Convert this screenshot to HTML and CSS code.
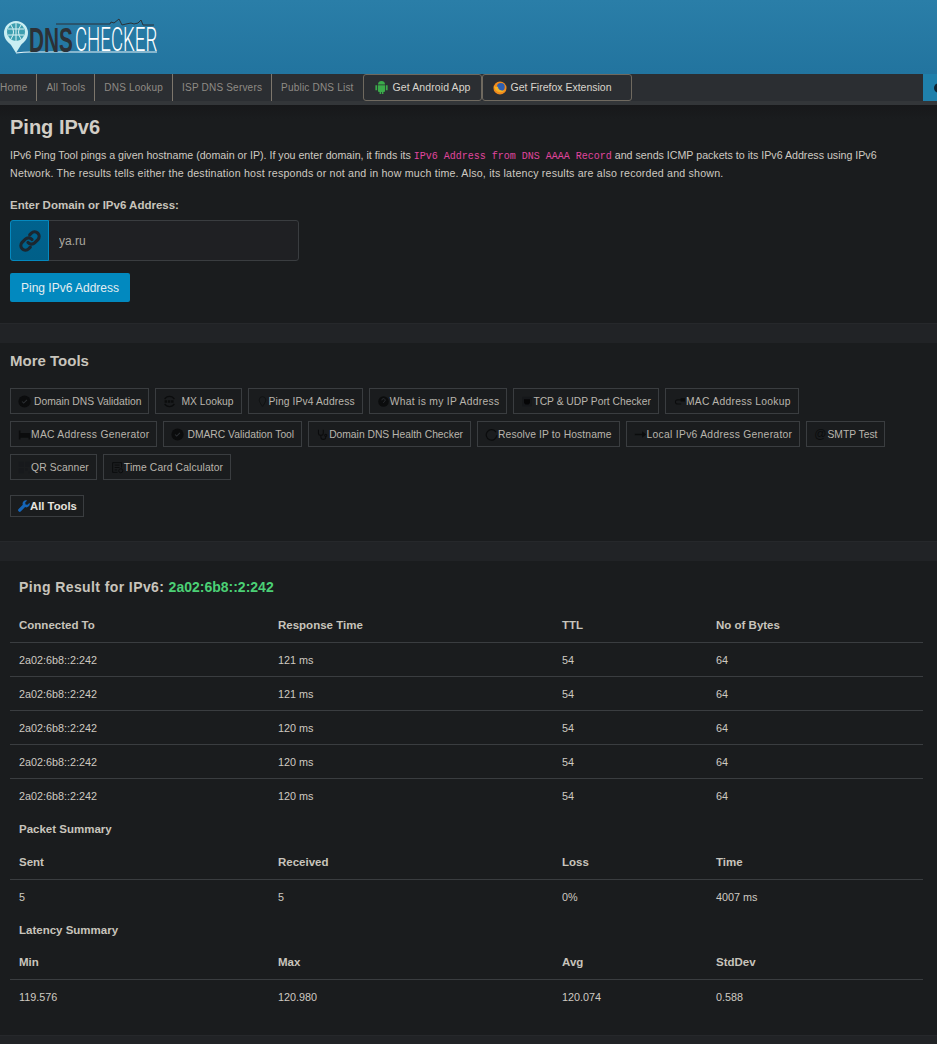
FILE: index.html
```html
<!DOCTYPE html>
<html lang="en">
<head>
    <meta charset="UTF-8">
    <meta name="viewport" content="width=device-width, initial-scale=1.0">
    <title>Ping IPv6</title>
    <link rel="stylesheet" href="styles.css">
</head>
<body>
    <header class="top">
        <svg class="logo" width="170" height="60" viewBox="0 0 170 60">
            <path d="M16 21a12 12 0 0 1 12 12c0 6-4 9-7 12l-5 8-5-8c-3-3-7-6-7-12a12 12 0 0 1 12-12z" fill="#c9eef2"/>
            <circle cx="16" cy="32" r="9" fill="#3e9fb0"/>
            <path d="M8 29h16M8 35h16M16 23v18M11 25q5 7 0 14M21 25q-5 7 0 14" stroke="#d9f2f4" stroke-width="1" fill="none"/>
            <path d="M16 53q8-1 14-1h127" stroke="#e8f6fa" stroke-width="1.200" fill="none"/>
            <path d="M56 24h54l1-2 3 1 5-4 3 6 4-1 5-1 3 1 4-1 3-3 2 5h11" stroke="#2c3136" stroke-width="1" fill="none"/>
            <text class="logo-dns" transform="translate(29 52) scale(.595 1)">DNS</text>
            <text class="logo-checker" transform="translate(75 51) scale(.565 1)">CHECKER</text>
        </svg>
    </header>

    <nav class="nav">
        <a class="nav-link first">Home</a>
        <a class="nav-link">All Tools</a>
        <a class="nav-link">DNS Lookup</a>
        <a class="nav-link">ISP DNS Servers</a>
        <a class="nav-link plain">Public DNS List</a>
        <a class="nav-btn android">
            <svg width="13" height="14" viewBox="0 0 13 14" fill="#3bab4a"><path d="M3 4.600a3.500 3.500 0 0 1 7 0zM3 5.300h7v5.600a1 1 0 0 1-1 1h-.6V14H6.900v-2.100H6.100V14H4.600v-2.100H4a1 1 0 0 1-1-1zM.4 5.300h1.800v5H.4zM10.800 5.300h1.800v5h-1.800z"/></svg>
            Get Android App
        </a>
        <a class="nav-btn firefox">
            <svg class="fox" width="14" height="14" viewBox="0 0 15 15"><circle cx="7.500" cy="7.500" r="7" fill="#f08a1d"/><circle cx="8.400" cy="6.400" r="4.200" fill="#2f5fb0"/><path d="M1 5q1 6 6 7 4 .5 6.400-3-2.400 2-5 1Q5 9 5.500 6 3 7 1 5z" fill="#f4b324"/></svg>
            Get Firefox Extension
        </a>
        <span class="nav-spacer"></span>
        <span class="nav-theme"><span class="theme-dot"></span></span>
    </nav>
    <div class="nav-strip"></div>

    <section class="panel intro">
        <h1>Ping IPv6</h1>
        <p class="lead">IPv6 Ping Tool pings a given hostname (domain or IP). If you enter domain, it finds its <code>IPv6 Address from DNS AAAA Record</code> and sends ICMP packets to its IPv6 Address using IPv6 <span class="lead-rest">Network. The results tells either the destination host responds or not and in how much time. Also, its latency results are also recorded and shown.</span></p>
        <label class="field-label" for="host">Enter Domain or IPv6 Address:</label>
        <div class="input-group">
            <span class="input-icon">
                <svg width="24" height="24" viewBox="0 0 24 24" fill="none" stroke="#1b2730" stroke-width="3.200" stroke-linecap="round"><path d="M10 13.500a4.500 4.500 0 0 0 6.600.4l3.300-3.300a4.600 4.600 0 0 0-6.500-6.500l-1.700 1.700"/><path d="M14 10.500a4.500 4.500 0 0 0-6.600-.4l-3.300 3.300a4.600 4.600 0 0 0 6.500 6.500l1.700-1.700"/></svg>
            </span>
            <input id="host" class="host-input" type="text" value="ya.ru">
        </div>
        <button class="ping-btn">Ping IPv6 Address</button>
    </section>

    <div class="band"></div>

    <section class="panel more">
        <h2>More Tools</h2>
        <div class="tools">
            <a class="tool"><svg class="ico" viewBox="0 0 16 16"><circle cx="8" cy="8" r="7.500" fill="#0b0c0d"/><path d="M5 8l2 2 4-4" stroke="#2c2f33" stroke-width="1.300" fill="none"/></svg>Domain DNS Validation</a>
            <a class="tool"><svg class="ico wide" viewBox="0 0 16 16" fill="none" stroke="#0b0c0d" stroke-width="1.500"><path d="M2 5a7 7 0 0 1 12 0M2 11a7 7 0 0 0 12 0"/><path d="M2 8h12" stroke-width="3" stroke-dasharray="3 1"/></svg>MX Lookup</a>
            <a class="tool loose"><svg class="ico flush" viewBox="0 0 16 16" fill="none" stroke="#0f1113" stroke-width="1.200"><path d="M8 2a4 4 0 0 1 4 4c0 3-4 8-4 8S4 9 4 6a4 4 0 0 1 4-4z"/></svg>Ping IPv4 Address</a>
            <a class="tool addr"><svg class="ico flush" viewBox="0 0 16 16"><circle cx="8" cy="8" r="6.500" fill="#0b0c0d"/><path d="M6 6.500a2 2 0 1 1 3 1.700c-.7.400-1 .8-1 1.500" stroke="#2c2f33" stroke-width="1.200" fill="none"/></svg>What is my IP Address</a>
            <a class="tool"><svg class="ico flush snug" viewBox="0 0 16 16"><rect x="1.500" y="1.500" width="13" height="13" rx="1" fill="#15171a"/><path d="M4 5h8v5l-2 2H6l-2-2z" fill="#050506"/></svg>TCP &amp; UDP Port Checker</a>
            <a class="tool addr"><svg class="ico flush" viewBox="0 0 16 16" fill="none" stroke="#0b0c0d" stroke-width="1.300"><path d="M13 6H6Q3 6 3 8.500T6 11h4"/><path d="M10 4.500h4v3h-4z" fill="#0b0c0d"/></svg>MAC Address Lookup</a>
            <a class="tool addr"><svg class="ico flush" viewBox="0 0 16 16" fill="#0b0c0d"><path d="M1 3h2v3h12v8h-2v-2H3v2H1z"/></svg>MAC Address Generator</a>
            <a class="tool"><svg class="ico" viewBox="0 0 16 16"><circle cx="8" cy="8" r="7.500" fill="#0b0c0d"/><path d="M5 8l2 2 4-4" stroke="#2c2f33" stroke-width="1.300" fill="none"/></svg>DMARC Validation Tool</a>
            <a class="tool"><svg class="ico flush" viewBox="0 0 16 16" fill="none" stroke="#0b0c0d" stroke-width="1.300"><path d="M3 2v4a3 3 0 0 0 6 0V2M6 9v2a3 3 0 0 0 6 0v-1"/><circle cx="12" cy="9" r="1.300"/></svg>Domain DNS Health Checker</a>
            <a class="tool loose"><svg class="ico flush" viewBox="0 0 16 16" fill="none" stroke="#0b0c0d" stroke-width="1.500"><path d="M13.500 5A6.500 6.500 0 1 0 14.500 9"/></svg>Resolve IP to Hostname</a>
            <a class="tool addr"><svg class="ico flush" viewBox="0 0 16 16"><path d="M1 7h9V4l5 4-5 4V9H1z" fill="#0b0c0d"/></svg>Local IPv6 Address Generator</a>
            <a class="tool"><span class="at">@</span>SMTP Test</a>
            <a class="tool loose"><svg class="ico flush" viewBox="0 0 16 16" fill="#17191c"><path d="M1 1h6v6H1zM9 1h6v6H9zM1 9h6v6H1zM9 9h3v3H9zM13 13h2v2h-2z"/></svg>QR Scanner</a>
            <a class="tool loose"><svg class="ico flush" viewBox="0 0 16 16" fill="none" stroke="#0b0c0d" stroke-width="1.200"><path d="M13 8V2H2v12h6M4.500 5h6M4.500 8h6M4.500 11h3"/><circle cx="12" cy="12" r="2.500"/></svg>Time Card Calculator</a>
        </div>
        <a class="all-tools"><svg width="12" height="12" viewBox="0 0 14 14" fill="#1565b8"><path d="M13.500 3.200 11 5.600 8.800 5.200 8.400 3l2.400-2.500A4 4 0 0 0 5.600 5.600L.7 10.500a1.900 1.900 0 0 0 2.700 2.700l4.900-4.900a4 4 0 0 0 5.200-5.100z"/></svg>All Tools</a>
    </section>

    <div class="band"></div>

    <section class="panel results">
        <h3>Ping Result for IPv6: <span class="ip">2a02:6b8::2:242</span></h3>
        <table class="grid">
            <thead><tr><th>Connected To</th><th>Response Time</th><th>TTL</th><th>No of Bytes</th></tr></thead>
            <tbody>
                <tr><td>2a02:6b8::2:242</td><td>121 ms</td><td>54</td><td>64</td></tr>
                <tr><td>2a02:6b8::2:242</td><td>121 ms</td><td>54</td><td>64</td></tr>
                <tr><td>2a02:6b8::2:242</td><td>120 ms</td><td>54</td><td>64</td></tr>
                <tr><td>2a02:6b8::2:242</td><td>120 ms</td><td>54</td><td>64</td></tr>
                <tr><td>2a02:6b8::2:242</td><td>120 ms</td><td>54</td><td>64</td></tr>
            </tbody>
        </table>
        <h4>Packet Summary</h4>
        <table class="grid">
            <thead><tr><th>Sent</th><th>Received</th><th>Loss</th><th>Time</th></tr></thead>
            <tbody><tr><td>5</td><td>5</td><td>0%</td><td>4007 ms</td></tr></tbody>
        </table>
        <h4>Latency Summary</h4>
        <table class="grid last">
            <thead><tr><th>Min</th><th>Max</th><th>Avg</th><th>StdDev</th></tr></thead>
            <tbody><tr><td>119.576</td><td>120.980</td><td>120.074</td><td>0.588</td></tr></tbody>
        </table>
    </section>

    <div class="band"></div>
</body>
</html>
```

FILE: styles.css
```css
html, body {
    margin: 0;
    padding: 0;
}

body {
    font-family: "Liberation Sans", Arial, sans-serif;
    font-size: 12px;
    color: #cfcac2;
    background-color: #1a1c1e;
}

.top {
    height: 74px;
    background: linear-gradient(#2a7ea8, #22749f);
}

.logo {
    display: block;
}

.logo-dns {
    font-family: "Liberation Sans", sans-serif;
    font-size: 35px;
    font-weight: bold;
    fill: #2c3136;
}

.logo-checker {
    font-family: Roboto, sans-serif;
    font-size: 33px;
    font-weight: 300;
    fill: #fff;
}

/* nav */
.nav {
    display: flex;
    height: 27px;
    background-color: #2b2e32;
}

.nav-link {
    display: flex;
    align-items: center;
    padding: 0 9px;
    font-size: 10px;
    letter-spacing: 0.2px;
    color: #8f8b85;
    border-right: 1px solid #7d766c;
}

.nav-link.first {
    padding-left: 0;
}

.nav-link.plain {
    border-right: 0;
}

.nav-btn {
    display: flex;
    align-items: center;
    font-size: 10.5px;
    color: #d9d5cd;
    border: 1px solid #6f695f;
    border-radius: 3px;
    padding-bottom: 2px;
    box-sizing: border-box;
}

.nav-btn.android {
    gap: 5px;
    width: 119px;
    padding-left: 11px;
    letter-spacing: 0.1px;
}

.nav-btn.firefox {
    gap: 4px;
    width: 150px;
    padding-left: 10px;
}

.fox {
    margin-top: 2px;
}

.nav-spacer {
    flex: 1;
}

.nav-theme {
    width: 14px;
    background-color: #1f80ab;
    display: flex;
    align-items: center;
    overflow: hidden;
}

.theme-dot {
    flex: none;
    width: 10px;
    height: 10px;
    margin-left: 11px;
    border-radius: 50%;
    background-color: #10222e;
}

.nav-strip {
    height: 4px;
    background-color: #333639;
}

/* sections */
.panel {
    background-color: #1a1c1e;
    padding: 0 10px;
    overflow: hidden;
}

.band {
    height: 19px;
    background-color: #212326;
    border-top: 1px solid #26282b;
}

.intro {
    height: 218px;
    box-sizing: border-box;
    background: linear-gradient(#17181a, #1a1c1e 14px);
}

h1 {
    margin: 11px 0 7px;
    font-size: 20px;
    line-height: 23px;
    color: #d2cec6;
}

.lead {
    margin: 0 0 16px;
    padding-right: 30px;
    font-size: 10.65px;
    line-height: 18px;
    color: #cfcac2;
}

.lead-rest {
    letter-spacing: 0.2px;
}

code {
    font-family: "Liberation Mono", monospace;
    font-size: 10px;
    line-height: 14px;
    color: #e0469f;
}

.field-label {
    display: block;
    margin-bottom: 8px;
    font-size: 11.5px;
    font-weight: bold;
    line-height: 14px;
    color: #c8c4bc;
}

.input-group {
    display: flex;
    width: 289px;
    height: 41px;
    box-sizing: border-box;
    border: 1px solid #3a3d40;
    border-radius: 3px;
    background-color: #1f2023;
}

.input-icon {
    display: flex;
    align-items: center;
    justify-content: center;
    box-sizing: border-box;
    width: 39px;
    margin: -1px 0 -1px -1px;
    border: 1px solid #0489bf;
    border-radius: 3px 0 0 3px;
    background: linear-gradient(#00628e, #005f88);
}

.host-input {
    flex: 1;
    min-width: 0;
    padding: 0 10px;
    border: 0;
    outline: 0;
    background: transparent;
    font-family: inherit;
    font-size: 12px;
    color: #aaa69e;
}

.ping-btn {
    display: block;
    margin-top: 12px;
    width: 120px;
    height: 29px;
    padding: 0;
    border: 0;
    border-radius: 2px;
    background-color: #0289bf;
    color: #e4eef2;
    font-family: inherit;
    font-size: 12px;
}

/* more tools */
.more {
    height: 198px;
    box-sizing: border-box;
}

h2 {
    margin: 9px 0 18px;
    font-size: 15px;
    line-height: 18px;
    color: #c8c4bc;
}

.tools {
    display: flex;
    flex-wrap: wrap;
    gap: 7px 6px;
}

.tool {
    display: flex;
    align-items: center;
    height: 24px;
    padding: 0 7px;
    border: 1px solid #3a3d40;
    font-size: 10.3px;
    color: #b9b5ad;
}

.tool.loose {
    letter-spacing: 0.12px;
}

.tool.addr {
    letter-spacing: 0.3px;
}

.ico {
    width: 13px;
    height: 13px;
    margin-right: 3px;
}

.ico.flush {
    margin-right: 0;
}

.ico.snug {
    width: 12px;
}

.ico.wide {
    margin-right: 5px;
}

.at {
    margin-right: 1px;
    font-size: 12px;
    color: #0b0c0d;
}

.all-tools {
    display: inline-flex;
    align-items: center;
    height: 20px;
    margin-top: 15px;
    padding: 0 6px 0 7px;
    border: 1px solid #3a3d40;
    font-size: 11.3px;
    font-weight: bold;
    color: #e6e3de;
}

/* results */
.results {
    height: 474px;
    box-sizing: border-box;
}

h3 {
    margin: 18px 0 12px 9px;
    font-size: 14px;
    line-height: 17px;
    letter-spacing: 0.4px;
    color: #c8c4bc;
}

.ip {
    letter-spacing: 0;
    color: #4bd075;
}

h4 {
    margin: 9px 0 8px 9px;
    font-size: 11.5px;
    line-height: 16px;
    color: #c8c4bc;
}

.grid {
    width: 913px;
    border-collapse: collapse;
    table-layout: fixed;
    font-size: 10.8px;
}

.grid th:nth-child(1) { width: 250px; }
.grid th:nth-child(2) { width: 275px; }
.grid th:nth-child(3) { width: 145px; }

.grid th {
    height: 33px;
    padding: 0 0 1px 9px;
    text-align: left;
    font-size: 11.5px;
    color: #c8c4bc;
    border-bottom: 1px solid #3a3d40;
}

.grid.last th {
    height: 32px;
}

.grid td {
    height: 33px;
    padding: 0 0 0 9px;
    color: #cfcac2;
    border-top: 1px solid #3a3d40;
}

.grid tbody tr:first-child td {
    border-top: 0;
}
```
